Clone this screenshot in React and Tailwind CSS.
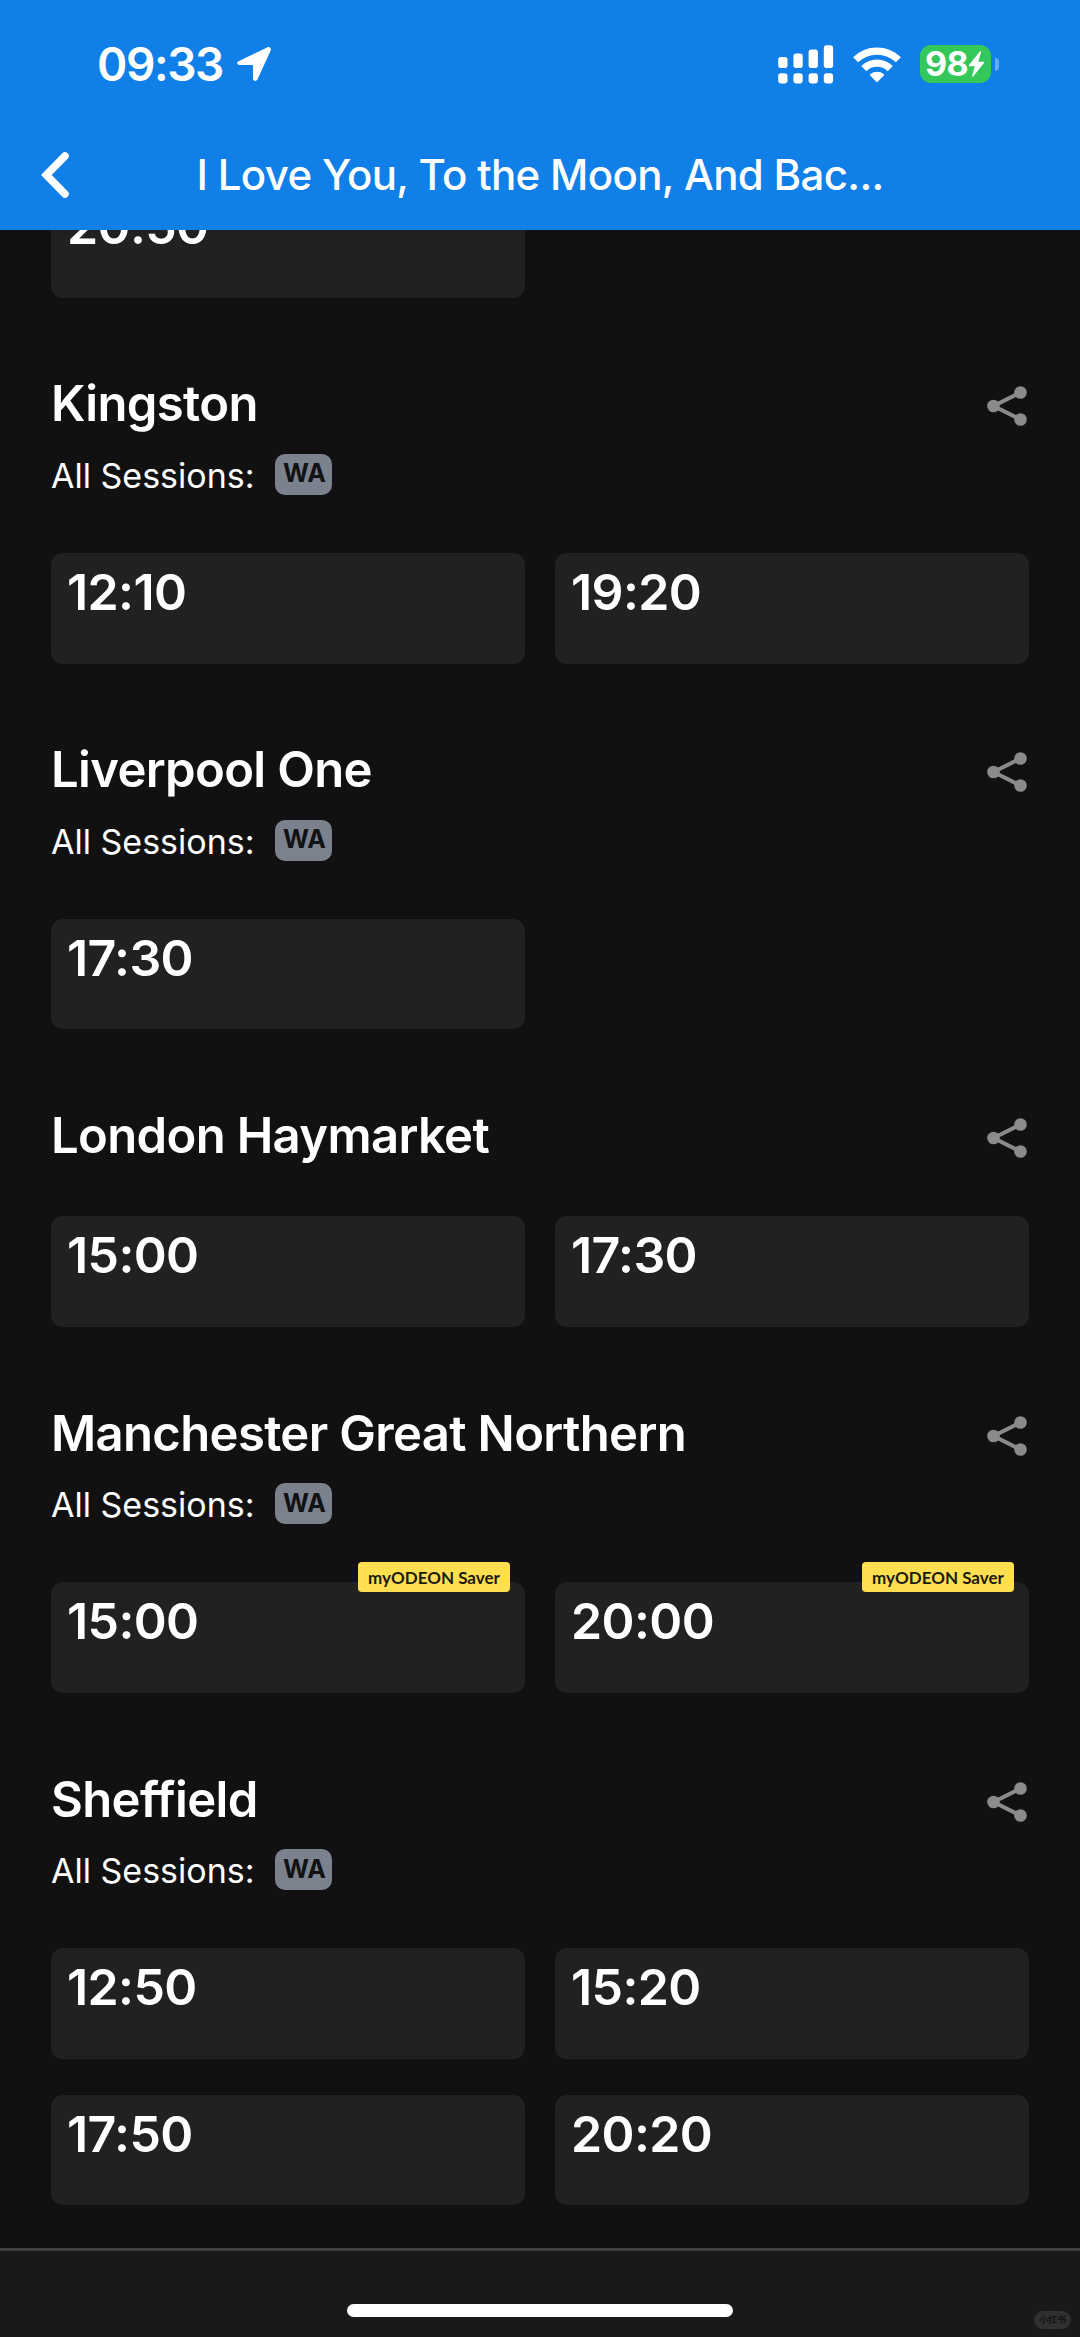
const CINEMAS = [
  { name: 'Kingston', walkAudio: true, times: [{ at: '12:10' }, { at: '19:20' }] },
  { name: 'Liverpool One', walkAudio: true, times: [{ at: '17:30' }] },
  { name: 'London Haymarket', walkAudio: false, times: [{ at: '15:00' }, { at: '17:30' }] },
  {
    name: 'Manchester Great Northern',
    walkAudio: true,
    times: [
      { at: '15:00', saver: true },
      { at: '20:00', saver: true },
    ],
  },
  {
    name: 'Sheffield',
    walkAudio: true,
    times: [{ at: '12:50' }, { at: '15:20' }, { at: '17:50' }, { at: '20:20' }],
  },
];

function LocationIcon() {
  return (
    <svg className="h-9 w-9" viewBox="0 0 36 36" fill="white">
      <path d="M2.6 15.2 31.2 1.4c2.4-1.1 4.5.9 3.4 3.3L21.4 33.6c-1.1 2.3-4.4 1.6-4.4-1V20.3c0-.8-.4-1.2-1.2-1.2H3.500c-2.500 0-3.200-2.900-.9-3.900Z" />
    </svg>
  );
}

function SignalIcon() {
  const tops = [12, 8.6, 4.6, 0.3];
  return (
    <svg className="h-[39px] w-[56px]" viewBox="0 0 56 39" fill="white">
      {tops.map((top, i) => (
        <g key={top}>
          <rect x={i * 15.2 + 0.2} y={top} width="9.3" height={23 - top} rx="2.8" />
          <rect x={i * 15.2 + 0.2} y="28.2" width="9.3" height="10.2" rx="2.8" />
        </g>
      ))}
    </svg>
  );
}

function WifiIcon() {
  return (
    <svg className="h-[37px] w-[48px]" viewBox="0 0 48 37" fill="none" stroke="white" strokeWidth="7.2">
      <path d="M2.6 13.8a30.5 30.5 0 0 1 42.8 0" />
      <path d="M10.8 22.6a18.7 18.7 0 0 1 26.4 0" />
      <path d="M24 36.6 17.2 29.6c-.5-.5-.5-1 0-1.5 3.9-3.3 9.7-3.3 13.6 0 .5.5.5 1 0 1.5Z" fill="white" stroke="none" />
    </svg>
  );
}

function Battery() {
  return (
    <div className="flex items-center gap-1">
      <div className="flex h-[38px] w-[71px] items-center rounded-[11px] bg-[#34c759] pl-[5px]">
        <span className="text-[34px] leading-[38px] font-bold tracking-[-0.5px]">98</span>
        <svg className="h-[26px] w-[17px] shrink-0" viewBox="0 0 17 26" fill="white">
          <path d="M11.8.6 1 14c-.5.7-.2 1.3.6 1.3h5.200L4.200 24.600c-.3 1 .6 1.4 1.2.6L16 12c.5-.7.2-1.300-.6-1.300h-5.100L13 1.300c.3-1-.6-1.400-1.200-.7Z" />
        </svg>
      </div>
      <div className="h-[13px] w-[4px] rounded-r-full bg-white/35" />
    </div>
  );
}

function ShareIcon() {
  return (
    <svg className="h-10 w-10" viewBox="0 0 40 40" fill="#8b8b8b">
      <path d="M33.500 6.500 6.500 20l27 13.500" fill="none" stroke="#8b8b8b" strokeWidth="4" />
      <circle cx="33.500" cy="6.500" r="6.300" />
      <circle cx="6.500" cy="20" r="6.300" />
      <circle cx="33.500" cy="33.500" r="6.300" />
    </svg>
  );
}

function Session({ at, saver }) {
  return (
    <div className="relative h-[110.8px] rounded-xl bg-[#212121] pt-2 pl-4">
      <span className="block text-[50px] leading-[62px] font-semibold tracking-[-0.6px]">{at}</span>
      {saver && (
        <span className="absolute -top-5 right-[15px] flex h-[30px] w-[152px] items-center justify-center rounded bg-[#ffdf4f] font-[Lato,sans-serif] text-[17px] font-bold text-[#1b1a10]">
          myODEON Saver
        </span>
      )}
    </div>
  );
}

function Cinema({ name, walkAudio, times }) {
  return (
    <section className="pt-[76px]">
      <div className="flex h-[60px] items-center justify-between">
        <h2 className="pt-px text-[49px] leading-[60px] font-semibold tracking-[-0.65px]">{name}</h2>
        <button className="mt-[5px] mr-[2px]">
          <ShareIcon />
        </button>
      </div>
      {walkAudio && (
        <div className="mt-5 flex h-[41px] items-center">
          <span className="w-[224px] pt-0.5 text-[34px] leading-[41px]">All Sessions:</span>
          <span className="flex h-[41px] w-[57px] items-center justify-center rounded-[10px] bg-[#7b828e] pl-0.5 text-[25px] font-bold text-[#111214]">
            WA
          </span>
        </div>
      )}
      <div className={`grid grid-cols-2 gap-x-[30px] gap-y-[35.7px] ${walkAudio ? 'mt-[58px]' : 'mt-[51.2px]'}`}>
        {times.map((t) => (
          <Session key={t.at} {...t} />
        ))}
      </div>
    </section>
  );
}

export default function App() {
  return (
    <div className="flex h-[2337px] w-[1080px] flex-col overflow-hidden bg-[#111111] font-[Inter,sans-serif] text-white">
      <header className="h-[229.5px] shrink-0 bg-[#1080e8]">
        <div className="flex h-[127px] items-center justify-between pt-px pr-[81px] pl-[97px]">
          <div className="flex items-center gap-3">
            <span className="w-[127px] text-[46px] leading-none font-semibold tracking-[-1.4px]">09:33</span>
            <LocationIcon />
          </div>
          <div className="flex items-center gap-[19px]">
            <SignalIcon />
            <WifiIcon />
            <Battery />
          </div>
        </div>
        <div className="grid h-[96px] grid-cols-[69px_1fr_69px] items-center">
          <button className="pl-[41px]">
            <svg className="h-[46px] w-[28px]" viewBox="0 0 28 46" fill="none" stroke="white" strokeWidth="7.5" strokeLinecap="round" strokeLinejoin="miter">
              <path d="M24 4 5.300 23 24 42" />
            </svg>
          </button>
          <h1 className="text-center text-[42px] leading-[52px] font-medium tracking-[-0.65px]">I Love You, To the Moon, And Bac...</h1>
        </div>
      </header>

      <main className="min-h-0 flex-1 overflow-hidden px-[51px]">
        {/* tail of the previous cinema, scrolled under the header */}
        <div className="-mt-[42.6px] grid grid-cols-2 gap-x-[30px]">
          <Session at="20:50" />
        </div>
        {CINEMAS.map((c) => (
          <Cinema key={c.name} {...c} />
        ))}
      </main>

      <footer className="relative flex h-[89px] shrink-0 justify-center border-t-[3px] border-[#3f3f3f] bg-[#191919] pt-[53px]">
        <div className="h-[13px] w-[386px] rounded-full bg-white" />
        <span className="absolute right-[9px] bottom-2 flex h-[18px] w-[37px] items-center justify-center rounded-full bg-[#303030] font-['Noto_Sans_CJK_SC',sans-serif] text-[9px] font-bold text-[#151515]">
          小红书
        </span>
      </footer>
    </div>
  );
}
